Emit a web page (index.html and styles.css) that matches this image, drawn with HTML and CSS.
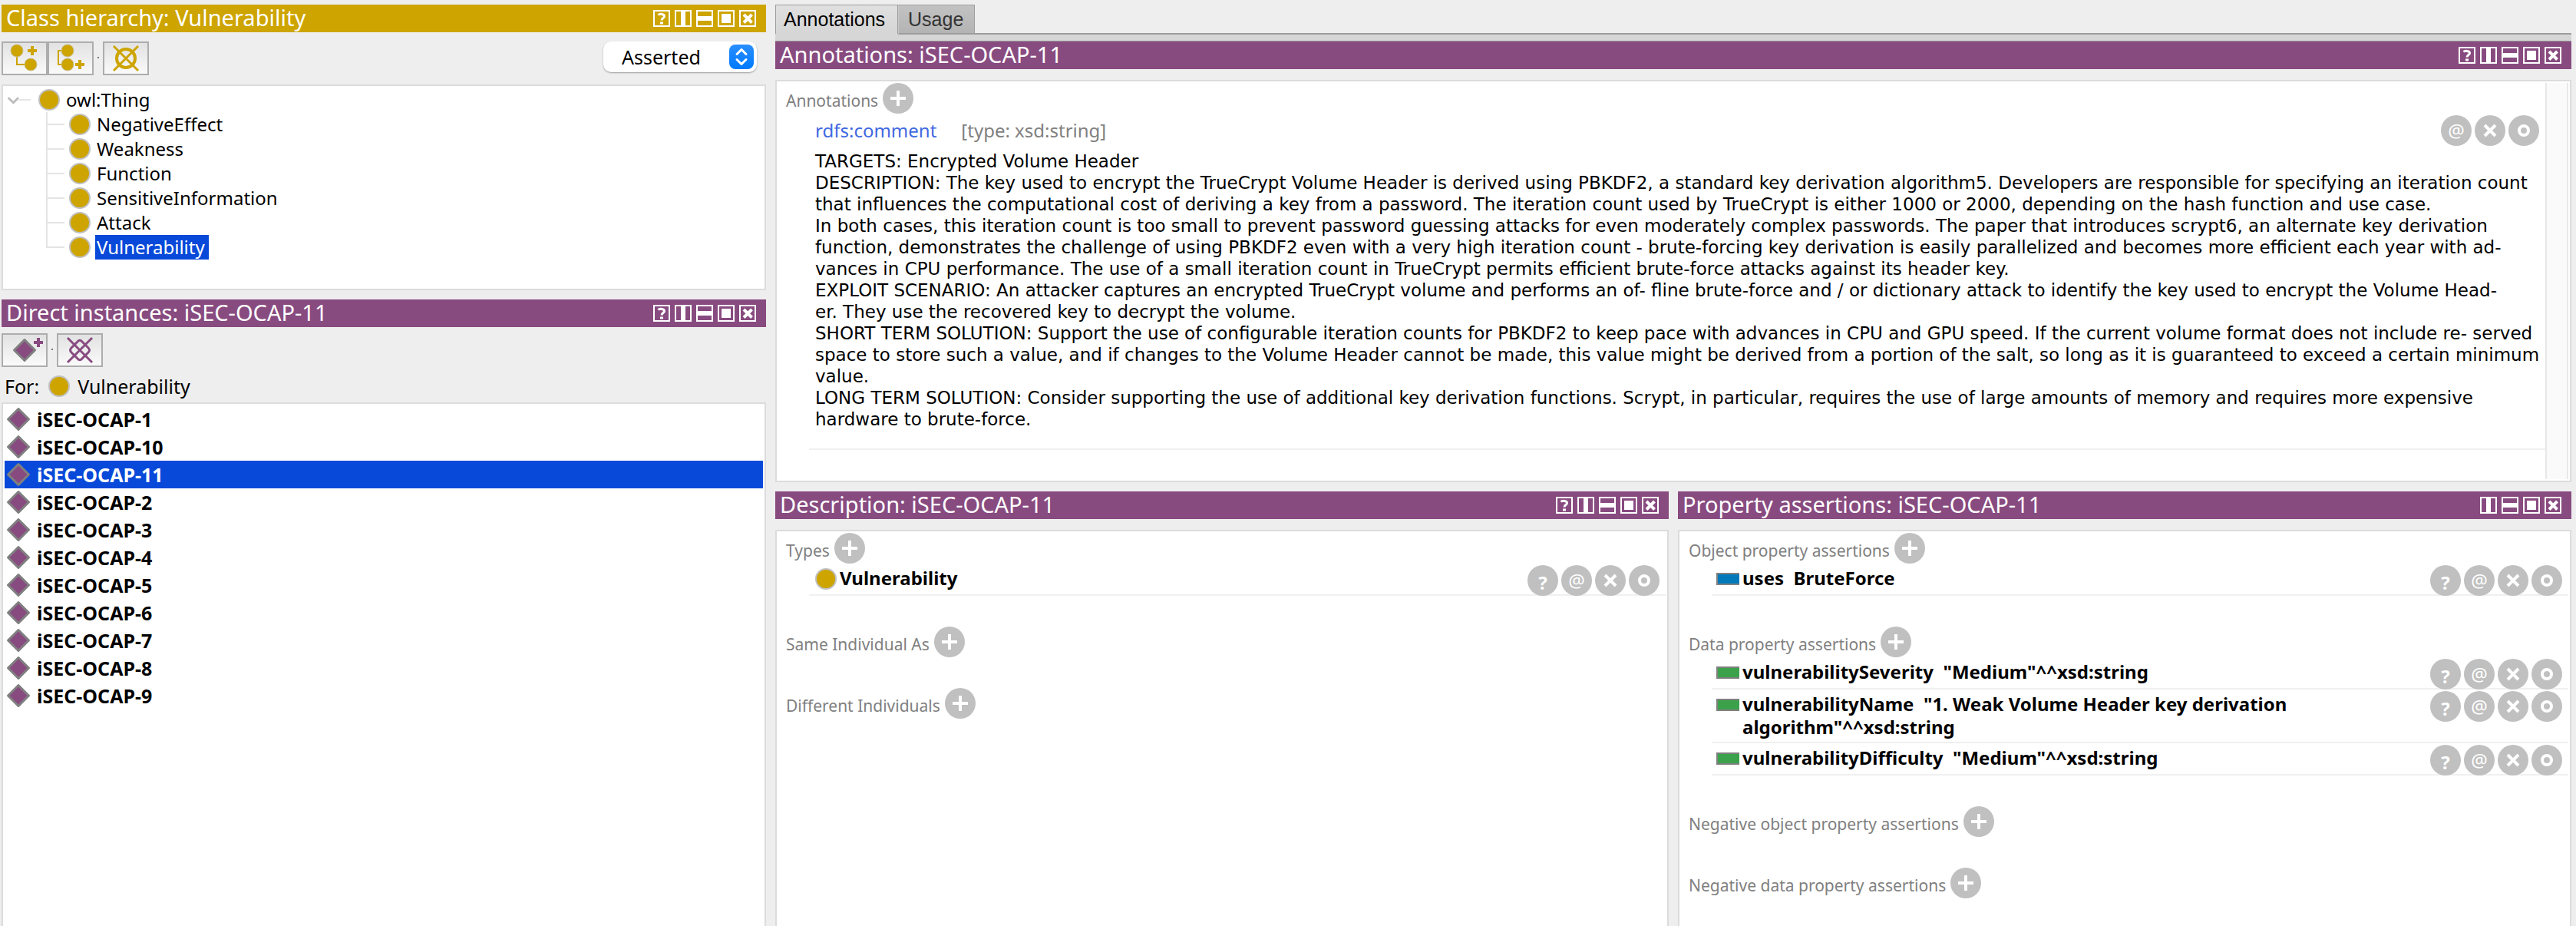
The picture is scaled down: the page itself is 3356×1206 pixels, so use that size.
FILE: index.html
```html
<!DOCTYPE html>
<html lang="en">
<head>
<meta charset="utf-8">
<title>Individuals: iSEC-OCAP-11</title>
<link rel="stylesheet" href="styles.css">
</head>
<body>
<svg class="defs" aria-hidden="true">
  <symbol id="i-help" viewBox="0 0 22 22"><path d="M1 1h20v20H1z" fill="none" stroke="#fff" stroke-width="2"/><path d="M6.500 6.500C8 5 14.500 4.500 14.500 8.200C14.500 10.500 11 10.500 11 13.500" fill="none" stroke="#fff" stroke-width="3"/><path d="M9 15.500h4v3H9z" fill="#fff"/></symbol>
  <symbol id="i-vsplit" viewBox="0 0 22 22"><path d="M1 1h20v20H1z" fill="none" stroke="#fff" stroke-width="2"/><path d="M8 2h6v18H8z" fill="#fff"/></symbol>
  <symbol id="i-hsplit" viewBox="0 0 22 22"><path d="M1 1h20v20H1z" fill="none" stroke="#fff" stroke-width="2"/><path d="M2 8h18v6H2z" fill="#fff"/></symbol>
  <symbol id="i-float" viewBox="0 0 22 22"><path d="M1 1h20v20H1z" fill="none" stroke="#fff" stroke-width="2"/><path d="M5 5h12v12H5z" fill="#fff"/></symbol>
  <symbol id="i-close" viewBox="0 0 22 22"><path d="M1 1h20v20H1z" fill="none" stroke="#fff" stroke-width="2"/><path d="M6 6l10.500 10.500M16.500 6L6 16.500" stroke="#fff" stroke-width="4"/></symbol>
  <symbol id="i-class" viewBox="0 0 28 28"><circle cx="14" cy="14" r="13" fill="#cda400" stroke="#c0c0c0" stroke-width="2"/></symbol>
  <symbol id="i-individual" viewBox="0 0 32 32"><path d="M16 2.500L29.500 16L16 29.500L2.500 16z" fill="#884b80" stroke="#808080" stroke-width="3" stroke-linejoin="round"/></symbol>
  <symbol id="i-object" viewBox="0 0 32 28"><path d="M0 6h30v16H0z" fill="#808080"/><path d="M2 8h28v12H2z" fill="#0079ba"/></symbol>
  <symbol id="i-data" viewBox="0 0 32 28"><path d="M0 6h30v16H0z" fill="#808080"/><path d="M2 8h28v12H2z" fill="#3ba24b"/></symbol>
  <symbol id="i-plus" viewBox="0 0 40 40"><path d="M10 20h20M20 10v20" stroke="#fff" stroke-width="4"/></symbol>
  <symbol id="i-x" viewBox="0 0 40 40"><path d="M13 13l14 14M27 13L13 27" stroke="#fff" stroke-width="4"/></symbol>
  <symbol id="i-o" viewBox="0 0 40 40"><circle cx="20" cy="20" r="6" fill="none" stroke="#fff" stroke-width="4"/></symbol>
</svg>

<div class="workspace">
  <div class="side">
    <section class="view">
      <header class="title title-class">
        <h2>Class hierarchy: Vulnerability</h2>
        <div class="title-tools">
          <button aria-label="Help"><svg><use href="#i-help"/></svg></button>
          <button aria-label="Split vertically"><svg><use href="#i-vsplit"/></svg></button>
          <button aria-label="Split horizontally"><svg><use href="#i-hsplit"/></svg></button>
          <button aria-label="Float"><svg><use href="#i-float"/></svg></button>
          <button aria-label="Close"><svg><use href="#i-close"/></svg></button>
        </div>
      </header>
      <div class="toolbar toolbar-class">
        <div class="tool-group">
          <button class="tool" aria-label="Add subclass"><svg viewBox="0 0 56 40"><path d="M18 11v17h16" fill="none" stroke="#cda400" stroke-width="2"/><g fill="#cda400" stroke="#c9bd8c" stroke-width="1"><circle cx="18" cy="10" r="8"/><circle cx="36" cy="28" r="8"/></g><path d="M32 10h12M38 4v12" stroke="#cda400" stroke-width="4"/></svg></button>
          <button class="tool" aria-label="Add sibling class"><svg viewBox="0 0 56 40"><path d="M24 10H12v18h12" fill="none" stroke="#cda400" stroke-width="2"/><g fill="#cda400" stroke="#c9bd8c" stroke-width="1"><circle cx="24" cy="10" r="8"/><circle cx="24" cy="28" r="8"/></g><path d="M34 28h12M40 22v12" stroke="#cda400" stroke-width="4"/></svg></button>
        </div>
        <span class="dot"></span>
        <button class="tool" aria-label="Delete class"><svg viewBox="0 0 56 40"><g fill="none" stroke="#cda400"><circle cx="28" cy="20" r="12" stroke-width="4"/><path d="M12 4l32 32M44 4L12 36" stroke-width="3"/></g></svg></button>
        <div class="mode">
          <select aria-label="Hierarchy shown"><option>Asserted</option><option>Inferred</option></select>
          <svg viewBox="0 0 32 32" aria-hidden="true"><defs><linearGradient id="blue" x2="0" y2="1"><stop stop-color="#2a8eff"/><stop offset="1" stop-color="#007aff"/></linearGradient></defs><rect width="32" height="32" rx="8" fill="url(#blue)"/><path d="M10 12.500l6-6l6 6M10 19.500l6 6l6-6" fill="none" stroke="#fff" stroke-width="3" stroke-linecap="round" stroke-linejoin="round"/></svg>
        </div>
      </div>
      <div class="pane tree">
        <div class="node root"><svg class="twisty" viewBox="0 0 40 32"><path d="M20 16h16" stroke="#e4e4e4" stroke-width="2"/><path d="M5 13l7 7l7-7" fill="none" stroke="#bcbcbc" stroke-width="3"/></svg><svg class="ico"><use href="#i-class"/></svg><span>owl:Thing</span></div>
        <ul>
          <li class="node"><svg class="ico"><use href="#i-class"/></svg><span>NegativeEffect</span></li>
          <li class="node"><svg class="ico"><use href="#i-class"/></svg><span>Weakness</span></li>
          <li class="node"><svg class="ico"><use href="#i-class"/></svg><span>Function</span></li>
          <li class="node"><svg class="ico"><use href="#i-class"/></svg><span>SensitiveInformation</span></li>
          <li class="node"><svg class="ico"><use href="#i-class"/></svg><span>Attack</span></li>
          <li class="node"><svg class="ico"><use href="#i-class"/></svg><span class="picked">Vulnerability</span></li>
        </ul>
      </div>
    </section>

    <section class="view grow">
      <header class="title">
        <h2>Direct instances: iSEC-OCAP-11</h2>
        <div class="title-tools">
          <button aria-label="Help"><svg><use href="#i-help"/></svg></button>
          <button aria-label="Split vertically"><svg><use href="#i-vsplit"/></svg></button>
          <button aria-label="Split horizontally"><svg><use href="#i-hsplit"/></svg></button>
          <button aria-label="Float"><svg><use href="#i-float"/></svg></button>
          <button aria-label="Close"><svg><use href="#i-close"/></svg></button>
        </div>
      </header>
      <div class="toolbar">
        <button class="tool" aria-label="Add individual"><svg viewBox="0 0 56 40"><path d="M28 6.500L41.500 20L28 33.500L14.500 20z" fill="#884b80" stroke="#808080" stroke-width="3" stroke-linejoin="round"/><path d="M40 10h12M46 4v12" stroke="#884b80" stroke-width="4"/></svg></button>
        <span class="dot"></span>
        <button class="tool" aria-label="Delete individual"><svg viewBox="0 0 56 40"><g fill="none" stroke="#884b80" stroke-width="3"><path d="M25 9q3-3.500 6 0l8 8q3 3 0 6l-8 8q-3 3.500-6 0l-8-8q-3-3 0-6z"/><path d="M12 4l32 32M44 4L12 36"/></g></svg></button>
      </div>
      <div class="for"><span>For:</span><svg class="ico"><use href="#i-class"/></svg><span>Vulnerability</span></div>
      <ul class="pane instances">
        <li><svg><use href="#i-individual"/></svg>iSEC-OCAP-1</li>
        <li><svg><use href="#i-individual"/></svg>iSEC-OCAP-10</li>
        <li class="picked"><svg><use href="#i-individual"/></svg>iSEC-OCAP-11</li>
        <li><svg><use href="#i-individual"/></svg>iSEC-OCAP-2</li>
        <li><svg><use href="#i-individual"/></svg>iSEC-OCAP-3</li>
        <li><svg><use href="#i-individual"/></svg>iSEC-OCAP-4</li>
        <li><svg><use href="#i-individual"/></svg>iSEC-OCAP-5</li>
        <li><svg><use href="#i-individual"/></svg>iSEC-OCAP-6</li>
        <li><svg><use href="#i-individual"/></svg>iSEC-OCAP-7</li>
        <li><svg><use href="#i-individual"/></svg>iSEC-OCAP-8</li>
        <li><svg><use href="#i-individual"/></svg>iSEC-OCAP-9</li>
      </ul>
    </section>
  </div>

  <div class="main">
    <div class="tabbed">
      <nav class="tabs">
        <button class="tab active">Annotations</button>
        <button class="tab">Usage</button>
      </nav>
      <section class="view">
        <header class="title">
          <h2>Annotations: iSEC-OCAP-11</h2>
          <div class="title-tools">
            <button aria-label="Help"><svg><use href="#i-help"/></svg></button>
            <button aria-label="Split vertically"><svg><use href="#i-vsplit"/></svg></button>
            <button aria-label="Split horizontally"><svg><use href="#i-hsplit"/></svg></button>
            <button aria-label="Float"><svg><use href="#i-float"/></svg></button>
            <button aria-label="Close"><svg><use href="#i-close"/></svg></button>
          </div>
        </header>
        <div class="pane facts scrolling">
          <div class="facts-body">
            <div class="section">
              <div class="section-head"><h3>Annotations</h3><button class="round" aria-label="Add annotation"><svg><use href="#i-plus"/></svg></button></div>
              <div class="annotation">
                <div class="annotation-head">
                  <a href="#comment">rdfs:comment</a><span class="type">[type: xsd:string]</span>
                  <div class="acts">
                    <button class="round" aria-label="Annotate">@</button>
                    <button class="round" aria-label="Delete"><svg><use href="#i-x"/></svg></button>
                    <button class="round" aria-label="Edit"><svg><use href="#i-o"/></svg></button>
                  </div>
                </div>
                <p id="comment">TARGETS: Encrypted Volume Header<br>
DESCRIPTION: The key used to encrypt the TrueCrypt Volume Header is derived using PBKDF2, a standard key derivation algorithm5. Developers are responsible for specifying an iteration count<br>
that influences the computational cost of deriving a key from a password. The iteration count used by TrueCrypt is either 1000 or 2000, depending on the hash function and use case.<br>
In both cases, this iteration count is too small to prevent password guessing attacks for even moderately complex passwords. The paper that introduces scrypt6, an alternate key derivation<br>
function, demonstrates the challenge of using PBKDF2 even with a very high iteration count - brute-forcing key derivation is easily parallelized and becomes more efficient each year with ad-<br>
vances in CPU performance. The use of a small iteration count in TrueCrypt permits efficient brute-force attacks against its header key.<br>
EXPLOIT SCENARIO: An attacker captures an encrypted TrueCrypt volume and performs an of- fline brute-force and / or dictionary attack to identify the key used to encrypt the Volume Head-<br>
er. They use the recovered key to decrypt the volume.<br>
SHORT TERM SOLUTION: Support the use of configurable iteration counts for PBKDF2 to keep pace with advances in CPU and GPU speed. If the current volume format does not include re- served<br>
space to store such a value, and if changes to the Volume Header cannot be made, this value might be derived from a portion of the salt, so long as it is guaranteed to exceed a certain minimum<br>
value.<br>
LONG TERM SOLUTION: Consider supporting the use of additional key derivation functions. Scrypt, in particular, requires the use of large amounts of memory and requires more expensive<br>
hardware to brute-force.</p>
              </div>
            </div>
          </div>
          <div class="scrollbar"></div>
        </div>
      </section>
    </div>

    <div class="lower">
      <section class="view">
        <header class="title">
          <h2>Description: iSEC-OCAP-11</h2>
          <div class="title-tools">
            <button aria-label="Help"><svg><use href="#i-help"/></svg></button>
            <button aria-label="Split vertically"><svg><use href="#i-vsplit"/></svg></button>
            <button aria-label="Split horizontally"><svg><use href="#i-hsplit"/></svg></button>
            <button aria-label="Float"><svg><use href="#i-float"/></svg></button>
            <button aria-label="Close"><svg><use href="#i-close"/></svg></button>
          </div>
        </header>
        <div class="pane facts">
          <div class="section">
            <div class="section-head"><h3>Types</h3><button class="round" aria-label="Add type"><svg><use href="#i-plus"/></svg></button></div>
            <div class="fact">
              <svg class="ico"><use href="#i-class"/></svg>
              <p>Vulnerability</p>
              <div class="acts">
                <button class="round ask" aria-label="Explain">?</button>
                <button class="round" aria-label="Annotate">@</button>
                <button class="round" aria-label="Delete"><svg><use href="#i-x"/></svg></button>
                <button class="round" aria-label="Edit"><svg><use href="#i-o"/></svg></button>
              </div>
            </div>
          </div>
          <div class="section"><div class="section-head"><h3>Same Individual As</h3><button class="round" aria-label="Add same individual"><svg><use href="#i-plus"/></svg></button></div></div>
          <div class="section"><div class="section-head"><h3>Different Individuals</h3><button class="round" aria-label="Add different individual"><svg><use href="#i-plus"/></svg></button></div></div>
        </div>
      </section>

      <section class="view">
        <header class="title">
          <h2>Property assertions: iSEC-OCAP-11</h2>
          <div class="title-tools">
            <button aria-label="Split vertically"><svg><use href="#i-vsplit"/></svg></button>
            <button aria-label="Split horizontally"><svg><use href="#i-hsplit"/></svg></button>
            <button aria-label="Float"><svg><use href="#i-float"/></svg></button>
            <button aria-label="Close"><svg><use href="#i-close"/></svg></button>
          </div>
        </header>
        <div class="pane facts">
          <div class="section">
            <div class="section-head"><h3>Object property assertions</h3><button class="round" aria-label="Add object property assertion"><svg><use href="#i-plus"/></svg></button></div>
            <div class="fact">
              <svg class="ico"><use href="#i-object"/></svg>
              <p>uses&nbsp; BruteForce</p>
              <div class="acts">
                <button class="round ask" aria-label="Explain">?</button>
                <button class="round" aria-label="Annotate">@</button>
                <button class="round" aria-label="Delete"><svg><use href="#i-x"/></svg></button>
                <button class="round" aria-label="Edit"><svg><use href="#i-o"/></svg></button>
              </div>
            </div>
          </div>
          <div class="section">
            <div class="section-head"><h3>Data property assertions</h3><button class="round" aria-label="Add data property assertion"><svg><use href="#i-plus"/></svg></button></div>
            <div class="fact">
              <svg class="ico"><use href="#i-data"/></svg>
              <p>vulnerabilitySeverity&nbsp; "Medium"^^xsd:string</p>
              <div class="acts">
                <button class="round ask" aria-label="Explain">?</button>
                <button class="round" aria-label="Annotate">@</button>
                <button class="round" aria-label="Delete"><svg><use href="#i-x"/></svg></button>
                <button class="round" aria-label="Edit"><svg><use href="#i-o"/></svg></button>
              </div>
            </div>
            <div class="fact">
              <svg class="ico"><use href="#i-data"/></svg>
              <p>vulnerabilityName&nbsp; "1. Weak Volume Header key derivation<br>algorithm"^^xsd:string</p>
              <div class="acts">
                <button class="round ask" aria-label="Explain">?</button>
                <button class="round" aria-label="Annotate">@</button>
                <button class="round" aria-label="Delete"><svg><use href="#i-x"/></svg></button>
                <button class="round" aria-label="Edit"><svg><use href="#i-o"/></svg></button>
              </div>
            </div>
            <div class="fact">
              <svg class="ico"><use href="#i-data"/></svg>
              <p>vulnerabilityDifficulty&nbsp; "Medium"^^xsd:string</p>
              <div class="acts">
                <button class="round ask" aria-label="Explain">?</button>
                <button class="round" aria-label="Annotate">@</button>
                <button class="round" aria-label="Delete"><svg><use href="#i-x"/></svg></button>
                <button class="round" aria-label="Edit"><svg><use href="#i-o"/></svg></button>
              </div>
            </div>
          </div>
          <div class="section"><div class="section-head"><h3>Negative object property assertions</h3><button class="round" aria-label="Add negative object property assertion"><svg><use href="#i-plus"/></svg></button></div></div>
          <div class="section"><div class="section-head"><h3>Negative data property assertions</h3><button class="round" aria-label="Add negative data property assertion"><svg><use href="#i-plus"/></svg></button></div></div>
        </div>
      </section>
    </div>
  </div>
</div>
</body>
</html>
```

FILE: styles.css
```css
* {
  box-sizing: border-box;
}

:root {
  --gold: #cda400;
  --purple: #884b80;
  --picked: #0849d9;
  --line: #dcdcdc;
  --round: #c0c0c0;
}

body {
  margin: 0;
  background: #eee;
  color: #000;
  font: 24px/32px "Noto Sans", "Open Sans", sans-serif;
}

h2, h3, p, ul {
  margin: 0;
  padding: 0;
  font-size: inherit;
  font-weight: normal;
  list-style: none;
}

button, select {
  font: inherit;
  color: inherit;
}

svg {
  display: block;
}

.defs {
  display: none;
}

.workspace {
  display: grid;
  grid-template-columns: 996fr 2340fr;
  gap: 12px;
  min-height: 100vh;
  padding: 6px 6px 0 2px;
}

.side, .main {
  display: flex;
  flex-direction: column;
  gap: 12px;
  min-width: 0;
}

.view {
  display: flex;
  flex-direction: column;
  min-width: 0;
}

.grow {
  flex: 1;
}

/* Title bars */
.title {
  display: flex;
  align-items: center;
  justify-content: space-between;
  height: 36px;
  padding: 0 13px 0 6px;
  background: var(--purple);
  color: #fff;
}

.title-class {
  background: var(--gold);
}

.title h2 {
  height: 36px;
  font-size: 29px;
  line-height: 34px;
  white-space: nowrap;
}

.title-tools {
  display: flex;
  gap: 6px;
}

.title-tools button {
  padding: 0;
  border: 0;
  background: none;
}

.title-tools svg {
  width: 22px;
  height: 22px;
}

.pane {
  border: 2px solid var(--line);
  background: #fff;
}

/* Toolbars */
.toolbar {
  display: flex;
  padding: 8px 0;
}

.toolbar-class {
  padding: 12px 0;
}

.tool-group {
  display: flex;
}

.tool {
  width: 60px;
  height: 44px;
  padding: 0;
  border: 2px solid #adadad;
  background: linear-gradient(#e2e2e2, #fafafa);
}

.tool svg {
  width: 56px;
  height: 40px;
}

.dot {
  width: 2px;
  height: 2px;
  margin: 20px 5px;
  background: #777;
}

.mode {
  position: relative;
  width: 200px;
  height: 40px;
  margin: 0 12px 0 auto;
}

.mode select {
  width: 100%;
  height: 100%;
  padding: 0 40px 0 24px;
  border: 0;
  border-radius: 10px;
  background: #fff;
  box-shadow: 0 1px 2px rgba(0, 0, 0, .35);
  font-size: 25px;
  appearance: none;
}

.mode svg {
  position: absolute;
  top: 4px;
  right: 4px;
  width: 32px;
  height: 32px;
  pointer-events: none;
}

/* Class tree */
.tree {
  padding: 2px 2px 38px;
}

.ico {
  flex: none;
  width: 28px;
  height: 28px;
}

.node {
  display: flex;
  align-items: center;
  gap: 6px;
  height: 32px;
}

.node span {
  padding: 0 5px 0 2px;
}

.twisty {
  width: 38px;
  height: 32px;
}

.tree ul {
  margin-left: 54px;
  background: linear-gradient(#e4e4e4, #e4e4e4) 0 0 / 2px calc(100% - 15px) no-repeat;
}

.tree li::before {
  width: 24px;
  height: 2px;
  background: #e4e4e4;
  content: "";
}

.picked {
  background: var(--picked);
  color: #fff;
}

/* Instances */
.for {
  display: flex;
  align-items: center;
  height: 38px;
  padding: 0 4px 4px;
  font-size: 25px;
}

.for .ico {
  margin: 0 10px 0 12px;
}

.instances {
  flex: 1;
  padding: 2px;
  border-bottom: 0;
  font-size: 25px;
  font-weight: bold;
}

.instances li {
  display: flex;
  align-items: center;
  gap: 8px;
  height: 36px;
  padding-left: 2px;
}

.instances svg {
  width: 32px;
  height: 32px;
}

/* Tabs */
.tabbed {
  min-width: 0;
}

.tabs {
  display: flex;
  height: 48px;
  border-bottom: 1px solid #9b9d9b;
  background: linear-gradient(#9b9d9b, #9b9d9b) 0 37px / 100% 2px no-repeat, linear-gradient(#d6d6d6, #d6d6d6) 0 39px / 100% 8px no-repeat;
}

.tab {
  height: 39px;
  padding: 0 14px 0 12px;
  border: 1px solid #9b9d9b;
  border-bottom-width: 2px;
  border-left-color: #c8c8c8;
  background: linear-gradient(#c2c2c2, #b4b4b4);
  color: #333;
  font-family: "Liberation Sans", Arial, sans-serif;
  font-size: 25px;
}

.tab.active {
  padding: 0 16px 0 10px;
  border-bottom-color: #d6d6d6;
  border-left-color: #9b9d9b;
  background: linear-gradient(#e0e0e0, #d6d6d6);
  color: #000;
}

/* Fact panes */
.lower {
  flex: 1;
  display: grid;
  grid-template-columns: 1fr 1fr;
  gap: 12px;
}

.facts {
  margin-top: 14px;
  padding: 2px;
}

.lower .facts {
  flex: 1;
  border-bottom: 0;
}

.scrolling {
  display: flex;
}

.facts-body {
  flex: 1;
  min-width: 0;
}

.scrollbar {
  width: 30px;
  border: solid #e8e8e8;
  border-width: 0 2px;
  background: #fafafa;
}

.section {
  margin-bottom: 40px;
}

.scrolling .section {
  margin-bottom: 38px;
}

.lower .section:last-child {
  margin-bottom: 0;
}

.section-head {
  display: flex;
  gap: 6px;
  height: 40px;
  padding-left: 10px;
}

.section-head h3 {
  padding-top: 8px;
  color: #808080;
  font-size: 21px;
  line-height: 30px;
}

.round {
  flex: none;
  display: grid;
  place-items: center;
  width: 40px;
  height: 40px;
  padding: 0;
  border: 0;
  border-radius: 50%;
  background: var(--round);
  color: #fff;
  line-height: 40px;
}

.round svg {
  width: 40px;
  height: 40px;
}

.ask {
  padding-top: 6px;
  font-weight: bold;
  line-height: 34px;
}

.acts {
  display: flex;
  gap: 4px;
  margin-left: auto;
}

.fact {
  display: flex;
  margin: 2px 0 0 40px;
  padding: 0 8px 0 6px;
  background: linear-gradient(#f0f0f0, #f0f0f0) 0 100% / 100% 2px no-repeat;
}

.fact .ico {
  width: 32px;
  height: 28px;
  margin: 4px 2px 0 0;
}

.fact p {
  padding: 2px 0 6px;
  font-weight: bold;
  line-height: 30px;
}

.annotation {
  margin: 2px 0 0 40px;
  padding: 0 8px 24px;
  border-bottom: 2px solid #f0f0f0;
}

.annotation-head {
  display: flex;
  align-items: center;
  height: 46px;
  padding-bottom: 6px;
}

.annotation-head a {
  color: #4169e1;
  text-decoration: none;
}

.type {
  margin-left: 32px;
  color: #808080;
}

.annotation p {
  font-family: "DejaVu Sans", "Noto Sans", sans-serif;
  font-size: 23px;
  line-height: 28px;
  white-space: nowrap;
}
```
